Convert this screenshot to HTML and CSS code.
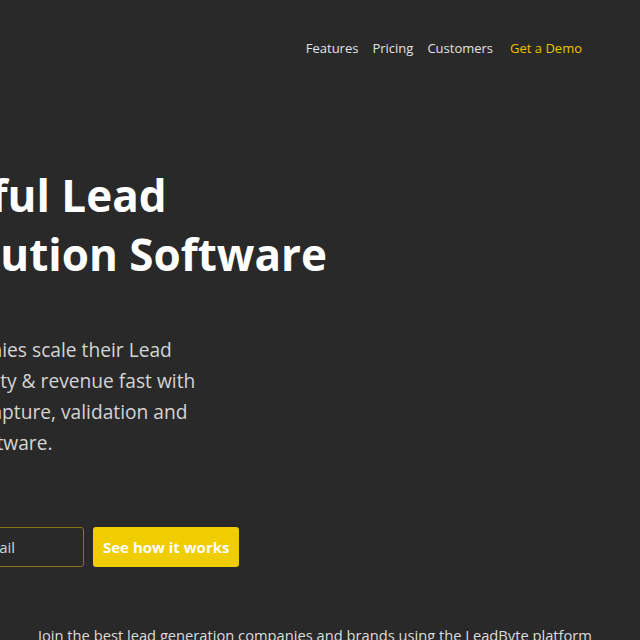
FILE: index.html
```html
<!DOCTYPE html>
<html lang="en">
<head>
<meta charset="utf-8">
<title>LeadByte</title>
<link rel="stylesheet" href="styles.css">
</head>
<body>
<header class="header">
  <nav class="nav">
    <a class="nav-link" href="#">Features</a>
    <a class="nav-link" href="#">Pricing</a>
    <a class="nav-link" href="#">Customers</a>
    <a class="nav-link nav-demo" href="#">Get a Demo</a>
  </nav>
</header>
<main class="hero">
  <h1 class="hero-title">Powerful Lead<br>Distribution Software</h1>
  <p class="hero-text">We help companies scale their Lead<br>generation activity &amp; revenue fast with<br>seamless lead capture, validation and<br>optimisation software.</p>
  <form class="hero-form">
    <input class="hero-input" type="email" placeholder="Email">
    <button class="hero-button" type="button">See how it works</button>
  </form>
</main>
<section class="clients">
  <p class="clients-text">Join the best lead generation companies and brands using the LeadByte platform</p>
</section>
</body>
</html>
```
FILE: styles.css
```css
* { box-sizing: border-box; }
html, body { margin: 0; padding: 0; }
body {
  background: #292929;
  font-family: "Open Sans", "Noto Sans", sans-serif;
  width: 640px;
  height: 640px;
  overflow: hidden;
}
.header {
  display: flex;
  justify-content: flex-end;
  padding: 38px 58px 0 0;
}
.nav {
  display: flex;
  gap: 14px;
}
.nav-link {
  font-size: 13px;
  line-height: 20px;
  color: #e2e2e2;
  text-decoration: none;
}
.nav-demo {
  color: #e8c500;
  margin-left: 3px;
}
.hero {
  margin-left: -148px;
  padding-top: 108px;
}
.hero-title {
  margin: 0;
  font-size: 44px;
  line-height: 59px;
  font-weight: 700;
  color: #ffffff;
}
.hero-text {
  margin: 50px 0 0;
  font-size: 19.2px;
  line-height: 31px;
  color: #d4d4d4;
}
.hero-form {
  display: flex;
  gap: 9px;
  margin-top: 69px;
}
.hero-input {
  width: 232px;
  height: 40px;
  padding: 0 0 0 124px;
  background: transparent;
  border: 1px solid #8a7712;
  border-radius: 3px;
  font-family: inherit;
  font-size: 15px;
  color: #d8d8d8;
}
.hero-input::placeholder { color: #d4d4d4; }
.hero-button {
  height: 40px;
  padding: 0 10px;
  background: #f0cd00;
  border: 0;
  border-radius: 3px;
  font-family: inherit;
  font-size: 15px;
  font-weight: 700;
  color: #ffffff;
}
.clients {
  display: flex;
  justify-content: center;
  padding: 58px 10px 0 0;
}
.clients-text {
  margin: 0;
  font-size: 14.7px;
  line-height: 20px;
  color: #dcdcdc;
  white-space: nowrap;
}
```
